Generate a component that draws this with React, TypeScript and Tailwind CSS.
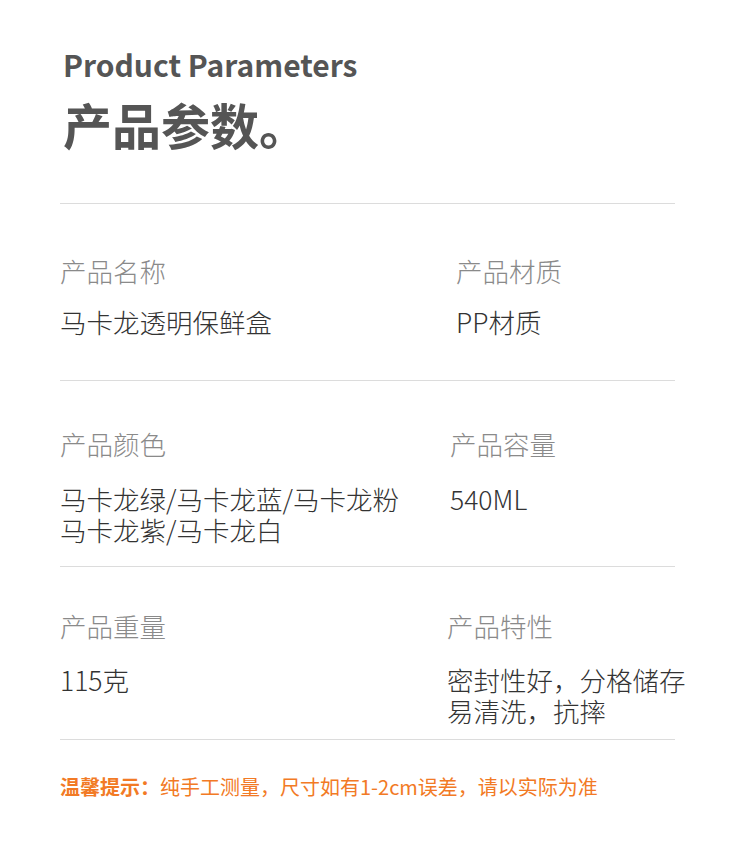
const FONT = "font-['Noto_Sans_CJK_SC','Noto_Sans',sans-serif]";

type Row = {
  leftLabel: string;
  leftValue: string[];
  rightLabel: string;
  rightValue: string[];
  leftWidth: string;
  pad: string;
  gap: string;
};

const rows: Row[] = [
  {
    leftLabel: "产品名称",
    leftValue: ["马卡龙透明保鲜盒"],
    rightLabel: "产品材质",
    rightValue: ["PP材质"],
    leftWidth: "w-[396px]",
    pad: "pt-[52px] pb-[43px]",
    gap: "mt-[20px]",
  },
  {
    leftLabel: "产品颜色",
    leftValue: ["马卡龙绿/马卡龙蓝/马卡龙粉", "马卡龙紫/马卡龙白"],
    rightLabel: "产品容量",
    rightValue: ["540ML"],
    leftWidth: "w-[390px]",
    pad: "pt-[48px] pb-[21px]",
    gap: "mt-[24px]",
  },
  {
    leftLabel: "产品重量",
    leftValue: ["115克"],
    rightLabel: "产品特性",
    rightValue: ["密封性好，分格储存", "易清洗，抗摔"],
    leftWidth: "w-[387px]",
    pad: "pt-[44px] pb-[13px]",
    gap: "mt-[23px]",
  },
];

function Cell({ label, value, gap, className }: { label: string; value: string[]; gap: string; className?: string }) {
  return (
    <div className={className}>
      <div className="text-[26.5px] leading-[30px] font-light text-[#8a8a8a] whitespace-nowrap">{label}</div>
      <div className={`text-[26.5px] leading-[31px] font-light text-[#333333] whitespace-nowrap ${gap}`}>
        {value.map((v) => (
          <div key={v}>{v}</div>
        ))}
      </div>
    </div>
  );
}

export default function App() {
  return (
    <div className={`w-[750px] h-[850px] bg-white ${FONT}`}>
      <div className="pl-[60px] pr-[75px] pt-[44px]">
        {/* 标题 */}
        <div className="pl-[3px]">
          <h2 className="text-[30px] leading-[40px] font-bold text-[#555555]">Product Parameters</h2>
          <h1 className="text-[49px] leading-[60px] font-bold text-[#555555] mt-[10px]">产品参数。</h1>
        </div>

        <div className="mt-[49px] border-t border-[#dcdcdc]" />

        {/* 参数表 */}
        {rows.map((r) => (
          <div key={r.leftLabel} className={`flex border-b border-[#dcdcdc] ${r.pad}`}>
            <Cell label={r.leftLabel} value={r.leftValue} gap={r.gap} className={`${r.leftWidth} shrink-0`} />
            <Cell label={r.rightLabel} value={r.rightValue} gap={r.gap} />
          </div>
        ))}

        {/* 提示 */}
        <p className="mt-[33px] text-[20px] leading-[28px] text-[#f27a25] whitespace-nowrap">
          <span className="font-bold">温馨提示：</span>纯手工测量，尺寸如有1-2cm误差，请以实际为准
        </p>
      </div>
    </div>
  );
}
